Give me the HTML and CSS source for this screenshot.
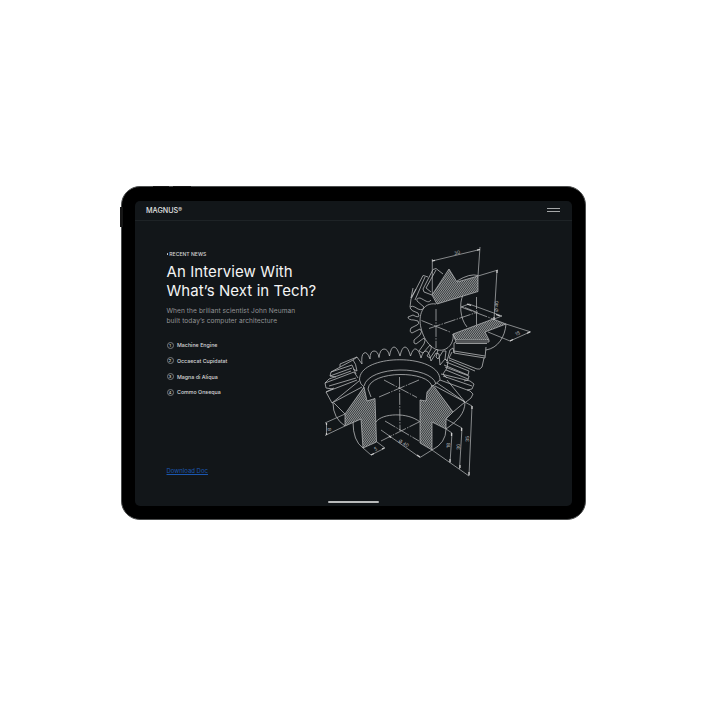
FILE: index.html
```
<!DOCTYPE html>
<html lang="en">
<head>
<meta charset="utf-8">
<title>Magnus</title>
<link rel="stylesheet" href="styles.css">
</head>
<body>
<main class="tablet">
  <i class="button volume-up"></i><i class="button volume-down"></i><i class="button power"></i>
  <div class="screen">
    <header class="bar">
      <span class="logo">MAGNUS<span class="mark">®</span></span>
      <span class="menu"></span>
    </header>
    <div class="content">
      <section class="article">
        <p class="eyebrow"><span class="dot"></span>RECENT NEWS</p>
        <h1>An Interview With<br>What’s Next in Tech?</h1>
        <p class="lead">When the briliant scientist John Neuman<br>built today’s computer architecture</p>
        <ol class="topics">
          <li><span class="num">1</span><span>Machine Engine</span></li>
          <li><span class="num">2</span><span>Occaecat Cupidatat</span></li>
          <li><span class="num">3</span><span>Magna di Aliqua</span></li>
          <li><span class="num">4</span><span>Commo Onsequa</span></li>
        </ol>
        <a class="download" href="#">Download Doc</a>
      </section>
      <svg class="gears" viewBox="318 240 220 240" width="220" height="240">
        <defs>
          <pattern id="hatch" width="1.6" height="1.6" patternUnits="userSpaceOnUse" patternTransform="rotate(-35)">
            <rect width="1.6" height="1.6" fill="#34383a"/><rect width="0.7" height="1.6" fill="#a0a2a3"/>
          </pattern>
        </defs>
        <!-- upper gear teeth -->
        <g class="line">
          <path d="M432 294L424 291L423 288L433 268.500L436 267.500L443 273M431 291L426 287M426 287L436 269M428 276L425 275L423 274.500L411 298L410 306M425 276L415 299M413 287L411 297L416 288"/>
          <path d="M431 299C428 303 425 299 420 297Q416 297 417 300L424 306Q423 310 418 308Q411 303 410 307Q411 310 418 312L419 315Q418 317 413 314L408 316Q408 319 414 319L418 320Q420 323 417 324L411 327Q409 331 412 332L420 328Q423 330 420 334L414 339Q413 343 416 343L424 337Q426 339 424 343L419 350L423 352L430 344Q432 344 431 348L427 355L430 357L436 348.500L438 349L436 356L438 358L443 350L446 350L445 358L447 360L450 349L453 347L454 352"/>
          <path d="M436 303C422 301 418 315 421 327C424 340 433 351 443 349C451 347 454 339 453 333"/>
          <path d="M463 294C459 302 460 318 467 326M457 280Q470 272 478 274.500M506 323C505 336 498 347 486 349"/>
          <path d="M453 333L456 341H489L489 339M456 341L454 342V352L485 357L486 346M456 342.500H487M454 350L485 355M484 357L482 366Q480 369 477 368L449 357L452 351M449 359L475 370M446 361L469 370L468 374L444 364"/>
        </g>
        <g class="solid">
          <path d="M432 294L449 268L457 281L478 275V290.500L437 303Z"/>
          <path d="M453 333L493 318L506 323L485 331L489 339H456Z"/>
        </g>
        <!-- upper axes and dimensions -->
        <g class="axis">
          <path d="M436 308V347M421.500 319.500L450 331M429 327.500L478 311M476.500 296V326M461 306L493 318M476 311L461 305"/>
        </g>
        <g class="thin">
          <path d="M432.300 293V258M432 260L480 248.500M480 246L478 275M478 275L498 269M497 269L494 319M506 323L531 331M488 331L510 340M510 340L530 331M461 306L469 303L502 315L494 318"/>
        </g>
        <g class="ends"><path d="M432 260L435 259.300M480 248.500L477 249.200M497 269V272M494 319V316M510 340L513 338.500M530 331L527 332.300M467 303L471 304.500M500 315L496 313.500"/></g>
        <!-- lower gear teeth and rim -->
        <g class="line">
          <path d="M353 368L357 370Q356 362 353 359L357 356L362 363Q361 354 364 352T370 358Q370 350 374 350T379 356.500Q380 348 384 348T389.500 355Q391 346 394 346T400 355Q402 346 405 346T410.500 355Q413 347 416 348T421 357Q423 350 426 350T431 360L436 352L439 353L440 364L445 358L448 360L447 367L443 373L447 377"/>
          <path d="M359.500 379C359 352 440 352 440 379M368 388C370 369 430 369 432 386M368 388L371 396M364 385C369 364 431 364 436 383M359.500 379Q360 383 364 386M440 379L433 385"/>
          <path d="M357 356L340 363V366M353 359L331 371L330 375L336 376M331 371L352 364L356 373M330 375L352 367M351 370L329 378L325 382L326 387L333 388M325 382L354 371L358 377M329 385L356 377M334 387L326 391L332 402L362 386M326 391L357 379M332 402L359 380"/>
          <path d="M445 366L469 375L468 379L464 380M446 369L468 378M441 373L470 380L474 383L472 388L467 389M443 375L472 385M440 379L470 390L473 393L471 397L466 401M437 382L465 401L447 379M435 385L465 401L453 411"/>
          <path d="M465 401C465 413 457 420 446 428M446 428Q446 442 432 449M333 402Q333 417 345 425M334 402L345 413M353 421Q353 440 363 447M376 421C382 412 408 411 420 421"/>
        </g>
        <g class="solid">
          <path d="M364 386L367 400L375 397.500L376.500 441L363 447L361 418L345 425V413Z"/>
          <path d="M433 384L453 411L446 418V428L432 421V449L420 442V399L426 400L427 391Z"/>
        </g>
        <g class="axis">
          <path d="M399.500 376L400 430M384 379L417 396.500M379 396L419 379M385 420L419 440M381 440L419 421"/>
        </g>
        <g class="thin">
          <path d="M381 429L420 456.500L432 449L469 475L472 405L463 400M446 418L462 427L459.500 468M446 428L452 432L450 462M325 422L345 413M325 434.500L345 425M326.500 422V434M363 447L371 454L385 447L377 441"/>
        </g>
        <g class="ends"><path d="M389 435L391 436.500M420 456L417 454M472 405V408M469 474V471M461.500 427V430M460 467V464M451.500 432V435M450 461V458M326.500 422V424M326.500 434V432M371 454L374 452.500M384 447L382 448"/></g>
        <g class="dims">
          <text transform="translate(454.500 254) rotate(-13)">30</text>
          <text transform="translate(498 311) rotate(-88)">Ø 40</text>
          <text transform="translate(516 335) rotate(-22)">15</text>
          <text transform="translate(398 441) rotate(30)">Ø 40</text>
          <text transform="translate(450 447) rotate(-88)">18</text>
          <text transform="translate(460 449) rotate(-88)">30</text>
          <text transform="translate(469 441) rotate(-88)">35</text>
          <text transform="translate(331 430) rotate(-88)">8</text>
          <text transform="translate(375 450) rotate(-25)">5</text>
        </g>
      </svg>
    </div>
    <i class="home"></i>
  </div>
</main>
</body>
</html>
```
FILE: styles.css
```
* { box-sizing: border-box; }
body {
  display: flex;
  align-items: flex-start;
  margin: 0;
  width: 707px;
  height: 707px;
  background: #fff;
  font-family: Inter, "Liberation Sans", sans-serif;
  overflow: hidden;
}
.tablet {
  position: relative;
  width: 465.5px;
  height: 334px;
  margin: 186px 0 0 120.5px;
  padding: 14px 13px 13px 13px;
  background: #000;
  border: 1px solid #4c4e4e;
  border-radius: 19px;
}
.button { position: absolute; background: #161616; }
.volume-up { left: 31px; top: -1px; width: 16px; height: 1px; }
.volume-down { left: 51px; top: -1px; width: 18px; height: 1px; }
.power { left: -2px; top: 20px; width: 3px; height: 20px; }
.screen {
  position: relative;
  width: 437.5px;
  height: 304.5px;
  background: #121619;
  border-radius: 5px;
  overflow: hidden;
}
.bar {
  display: flex;
  justify-content: space-between;
  align-items: center;
  height: 19.5px;
  padding: 0 12px 0 11.5px;
  border-bottom: 1px solid #1e2326;
  color: #e2e3e3;
}
.logo { font-size: 7.2px; line-height: 9px; font-weight: 500; }
.mark { font-size: 5.6px; vertical-align: 1.2px; }
.menu { width: 13px; height: 4px; border: solid #a5a7a8; border-width: 1px 0; }
.content { display: flex; padding-left: 32px; }
.article {
  display: flex;
  flex-direction: column;
  align-items: flex-start;
  width: 151.5px;
  padding-top: 30px;
}
.eyebrow {
  display: flex;
  align-items: center;
  margin: 0;
  color: #d4d5d5;
  font-size: 5.1px;
  font-weight: 500;
  line-height: 7px;
}
.dot { width: 1.3px; height: 1.3px; margin-right: 1.5px; border-radius: 50%; background: #d4d5d5; }
h1 {
  margin: 5.5px 0 0;
  color: #f4f4f4;
  font-size: 15px;
  font-weight: 400;
  letter-spacing: 0.08px;
  line-height: 18.5px;
  white-space: nowrap;
}
.lead {
  margin: 5.5px 0 0;
  color: #929496;
  font-size: 6.6px;
  letter-spacing: 0.07px;
  line-height: 10.5px;
  white-space: nowrap;
}
.topics {
  display: flex;
  flex-direction: column;
  gap: 7.8px;
  margin: 14.5px 0 0;
  padding: 0;
  list-style: none;
  color: #d6d7d8;
  font-size: 5.3px;
  font-weight: 500;
  line-height: 8px;
}
.topics li { display: flex; align-items: center; gap: 3.5px; height: 8px; white-space: nowrap; }
.num {
  display: grid;
  place-items: center;
  width: 7px;
  height: 7px;
  border: 1px solid #777a7c;
  border-radius: 50%;
  font-size: 4px;
  line-height: 5px;
}
.download {
  margin-top: 70px;
  color: #1b57b0;
  font-size: 6px;
  line-height: 9px;
  text-decoration: underline;
  text-decoration-thickness: 0.5px;
  text-underline-offset: 1px;
}
.gears { flex: none; margin-top: 20px; }
.line { fill: none; stroke: #c0c2c3; stroke-width: 0.75; stroke-linejoin: round; }
.solid { fill: url(#hatch); stroke: #c8c9ca; stroke-width: 0.65; }
.thin { fill: none; stroke: #b8babb; stroke-width: 0.7; }
.axis { fill: none; stroke: #c0c2c3; stroke-width: 0.7; stroke-dasharray: 12 1.2 1.5 1.2; }
.ends { fill: none; stroke: #d0d0d0; stroke-width: 1.2; }
.dims { fill: #b8babb; font-size: 4.8px; }
.home {
  position: absolute;
  left: 193.5px;
  bottom: 2.5px;
  width: 51px;
  height: 2px;
  border-radius: 1px;
  background: #b9babb;
}
```
